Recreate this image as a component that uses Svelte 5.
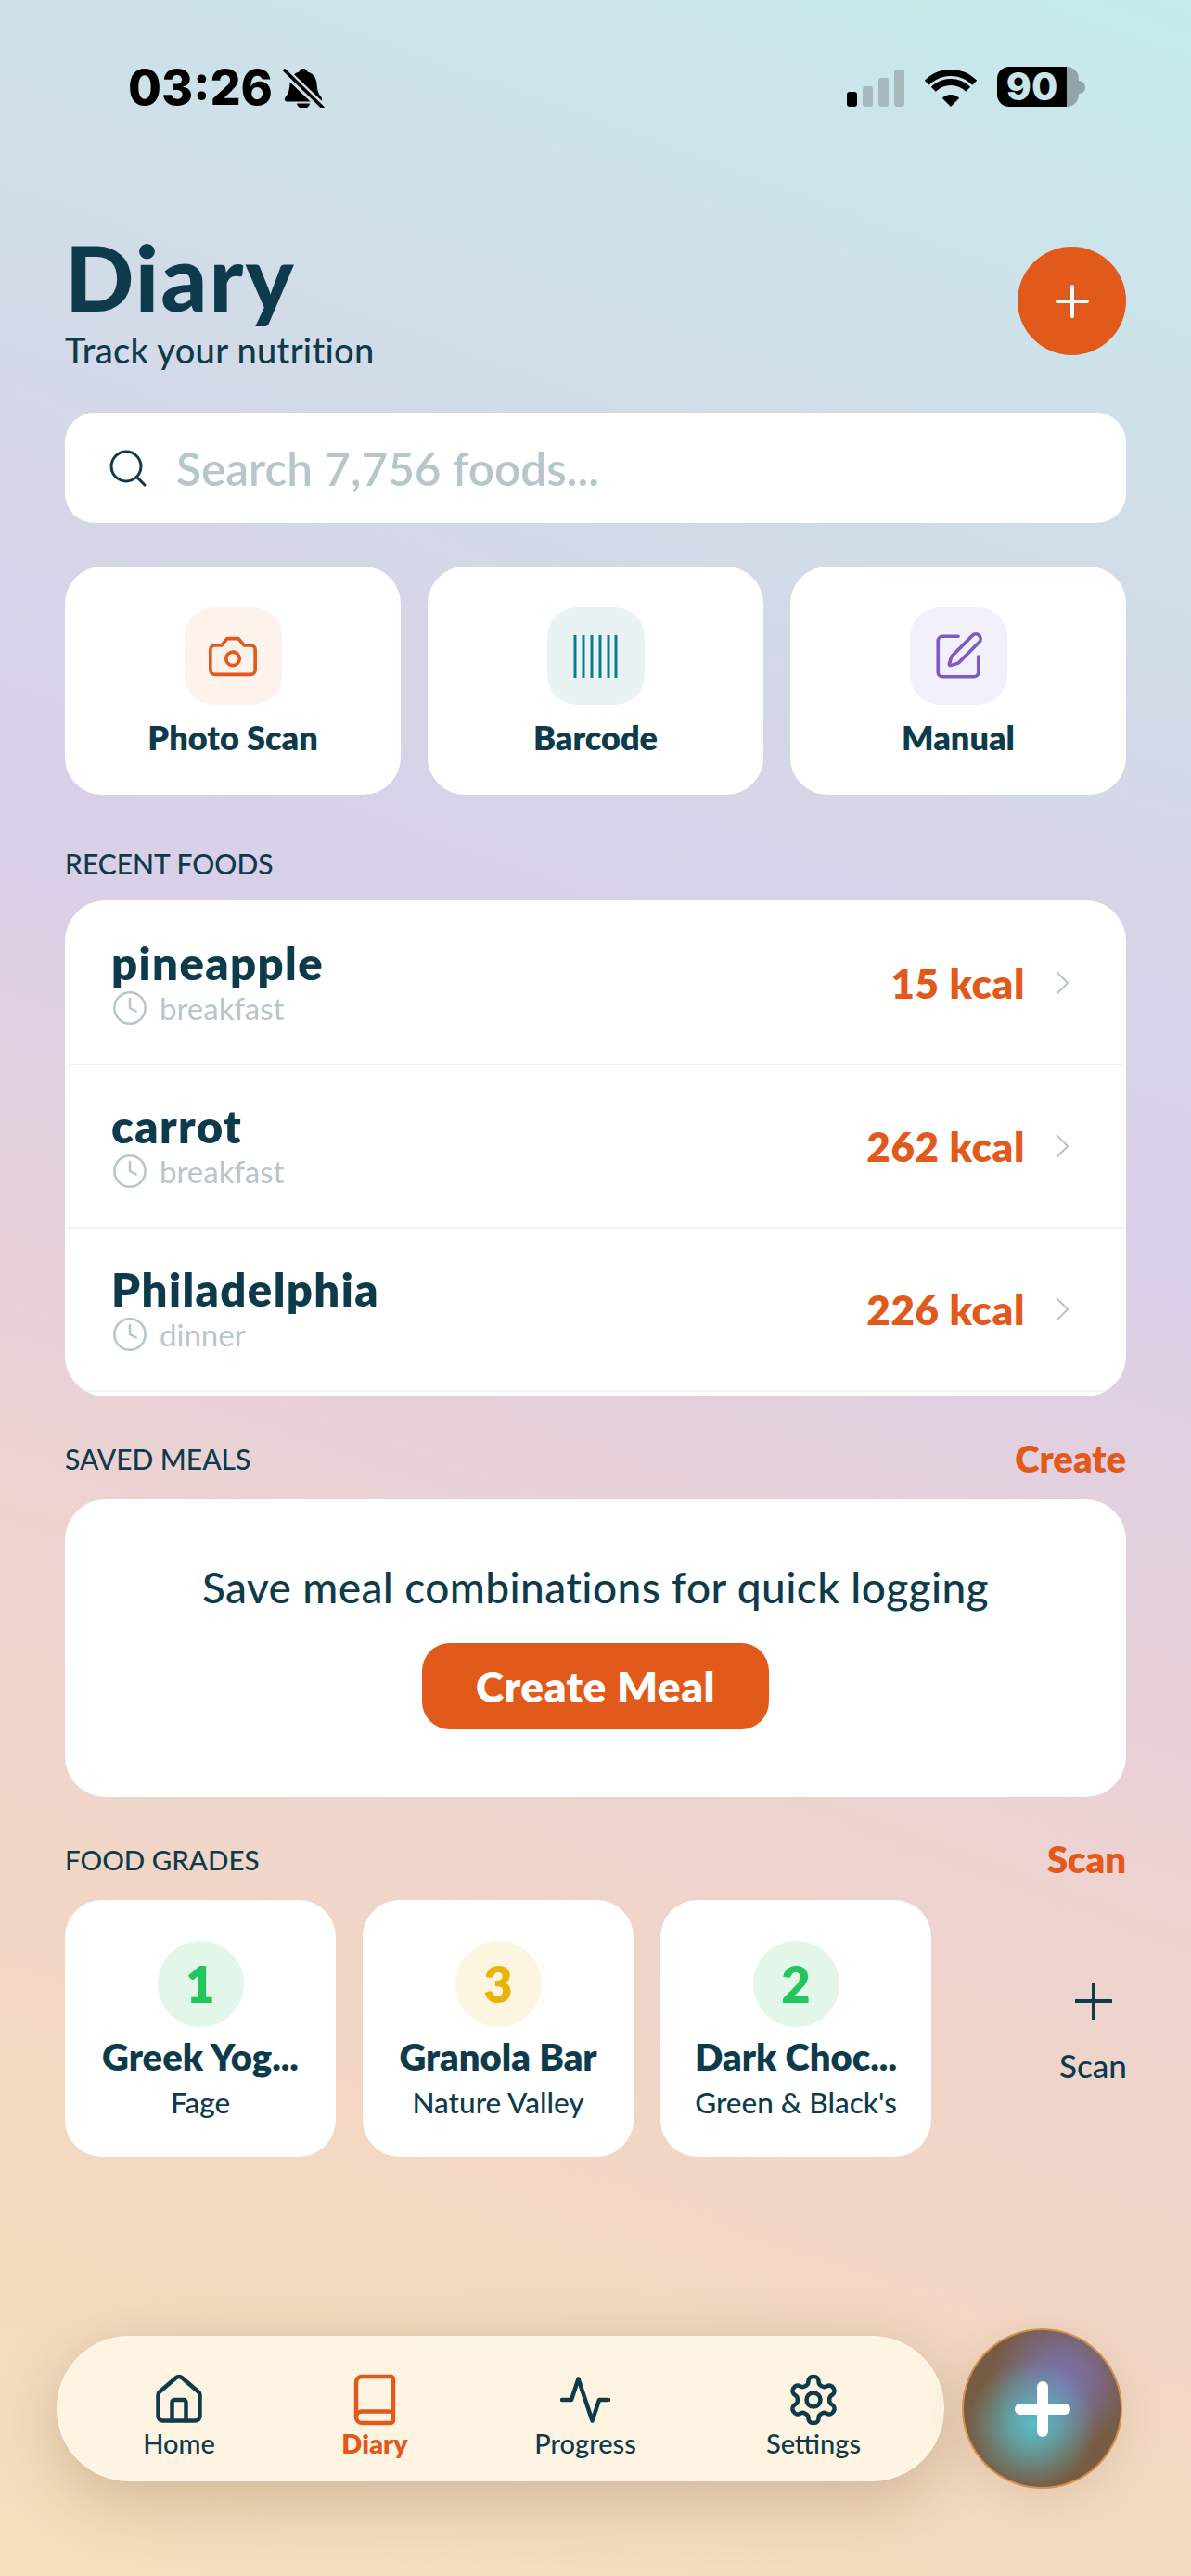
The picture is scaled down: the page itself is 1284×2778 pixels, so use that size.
<script>
  const actions = [
    { label: 'Photo Scan', cls: 'orange', kind: 'camera' },
    { label: 'Barcode', cls: 'teal', kind: 'barcode' },
    { label: 'Manual', cls: 'purple', kind: 'pen' }
  ];
  const foods = [
    { name: 'pineapple', meal: 'breakfast', kcal: '15 kcal' },
    { name: 'carrot', meal: 'breakfast', kcal: '262 kcal' },
    { name: 'Philadelphia', meal: 'dinner', kcal: '226 kcal' }
  ];
  const grades = [
    { n: 1, name: 'Greek Yog...', brand: 'Fage', cls: 'green' },
    { n: 3, name: 'Granola Bar', brand: 'Nature Valley', cls: 'yellow' },
    { n: 2, name: 'Dark Choc...', brand: "Green & Black's", cls: 'green' }
  ];
  const nav = [
    { label: 'Home', kind: 'home' },
    { label: 'Diary', kind: 'book', active: true },
    { label: 'Progress', kind: 'activity' },
    { label: 'Settings', kind: 'gear' }
  ];
</script>

<div class="page">
  <div class="status">
    <div class="status-left">
      <span class="time">03:26</span>
      <svg class="bell" viewBox="0 0 46 44" width="46" height="44">
        <mask id="slash"><rect width="46" height="44" fill="#fff" /><line x1="1" y1="2" x2="44" y2="43" stroke="#000" stroke-width="9" /></mask>
        <path mask="url(#slash)" fill="#000" d="M23 1c2.500 0 4 1.500 4.500 3.500C33.500 6 37 11 37.500 17c.5 7 1.500 11 5 15 1.500 2 .5 4.500-2 4.500H5.500c-2.500 0-3.500-2.500-2-4.500 3.500-4 4.500-8 5-15C9 11 12.500 6 18.500 4.500 19 2.500 20.500 1 23 1z" />
        <path mask="url(#slash)" fill="#000" d="M16 38.500h14c-.5 3.500-3.500 5.500-7 5.500s-6.500-2-7-5.500z" />
        <line x1="3" y1="3" x2="44" y2="43" stroke="#000" stroke-width="3.600" stroke-linecap="round" />
      </svg>
    </div>
    <div class="status-right">
      <div class="signal"><i class="on b1"></i><i class="b2"></i><i class="b3"></i><i class="b4"></i></div>
      <svg class="wifi" viewBox="0 0 56 40" width="56" height="40">
        <path d="M2.200 14.200A36.500 36.500 0 0 1 53.800 14.200" fill="none" stroke="#000" stroke-width="7" />
        <path d="M9.300 21.300A26.500 26.500 0 0 1 46.700 21.300" fill="none" stroke="#000" stroke-width="7" />
        <path d="M28 40L18.800 30.800A13 13 0 0 1 37.200 30.800Z" fill="#000" />
      </svg>
      <div class="battery"><div class="batt-fill">90</div><div class="batt-rest"></div><div class="nib"></div></div>
    </div>
  </div>

  <header class="head">
    <div class="titles">
      <h1>Diary</h1>
      <p>Track your nutrition</p>
    </div>
    <div class="add">
      <svg viewBox="0 0 36 36" width="36" height="36"><path d="M18 2v32M2 18h32" stroke="#fff" stroke-width="4" stroke-linecap="round" /></svg>
    </div>
  </header>

  <div class="search">
    <svg viewBox="0 0 24 24" width="48" height="48" fill="none" stroke="#0d3b4c" stroke-width="1.500" stroke-linecap="round" stroke-linejoin="round"><circle cx="11" cy="11" r="8" /><path d="m21 21-4.300-4.300" /></svg>
    <span>Search 7,756 foods...</span>
  </div>

  <div class="actions">
    {#each actions as a}
      <div class="action">
        <div class="tile {a.cls}">
          {#if a.kind === 'camera'}
            <svg viewBox="0 0 24 24" width="58" height="58" fill="none" stroke="#e1591b" stroke-width="1.500" stroke-linecap="round" stroke-linejoin="round"><path d="M14.500 4h-5L7 7H4a2 2 0 0 0-2 2v9a2 2 0 0 0 2 2h16a2 2 0 0 0 2-2V9a2 2 0 0 0-2-2h-3l-2.500-3z" /><circle cx="12" cy="13" r="3" /></svg>
          {:else if a.kind === 'barcode'}
            <svg viewBox="0 0 48 48" width="48" height="48" stroke="#0e7c90" stroke-width="3"><path d="M2 1v46M11 1v46M20 1v46M29 1v46M38 1v46M46 1v46" /></svg>
          {:else}
            <svg viewBox="0 0 24 24" width="58" height="58" fill="none" stroke="#7c5cc4" stroke-width="1.500" stroke-linecap="round" stroke-linejoin="round"><path d="M12 3H5a2 2 0 0 0-2 2v14a2 2 0 0 0 2 2h14a2 2 0 0 0 2-2v-7" /><path d="M18.375 2.625a1 1 0 0 1 3 3l-9.013 9.014a2 2 0 0 1-.853.505l-2.873.84a.5.500 0 0 1-.62-.62l.84-2.873a2 2 0 0 1 .506-.852z" /></svg>
          {/if}
        </div>
        <div class="action-label">{a.label}</div>
      </div>
    {/each}
  </div>

  <div class="sec-head recent"><span class="sec-title">RECENT FOODS</span></div>
  <div class="card list">
    {#each foods as f}
      <div class="row">
        <div>
          <div class="food">{f.name}</div>
          <div class="meal">
            <svg viewBox="0 0 24 24" width="40" height="40" fill="none" stroke="#b7c6cb" stroke-width="1.500" stroke-linecap="round" stroke-linejoin="round"><circle cx="12" cy="12" r="10" /><path d="M12 6v6l4 2" /></svg>
            <span>{f.meal}</span>
          </div>
        </div>
        <div class="kcal-wrap">
          <span class="kcal">{f.kcal}</span>
          <svg viewBox="0 0 24 24" width="34" height="34" fill="none" stroke="#b7c6cb" stroke-width="1.500" stroke-linecap="round" stroke-linejoin="round"><path d="m9 4 8 8-8 8" /></svg>
        </div>
      </div>
    {/each}
  </div>

  <div class="sec-head saved"><span class="sec-title">SAVED MEALS</span><span class="link">Create</span></div>
  <div class="card empty">
    <p>Save meal combinations for quick logging</p>
    <div class="cta">Create Meal</div>
  </div>

  <div class="sec-head gradesh"><span class="sec-title fg">FOOD GRADES</span><span class="link">Scan</span></div>
  <div class="grades">
    {#each grades as g}
      <div class="grade">
        <div class="badge {g.cls}">{g.n}</div>
        <div class="gname">{g.name}</div>
        <div class="gbrand">{g.brand}</div>
      </div>
    {/each}
    <div class="scan">
      <svg viewBox="0 0 40 40" width="40" height="40"><path d="M20 1v38M1 20h38" stroke="#0d3b4c" stroke-width="4" stroke-linecap="round" /></svg>
      <span>Scan</span>
    </div>
  </div>

  <nav class="nav">
    {#each nav as n}
      <div class="nav-item" class:active={n.active}>
        <svg viewBox="0 0 24 24" width="60" height="60" fill="none" stroke="currentColor" stroke-width="1.800" stroke-linecap="round" stroke-linejoin="round">
          {#if n.kind === 'home'}
            <path d="M15 21v-8a1 1 0 0 0-1-1h-4a1 1 0 0 0-1 1v8" /><path d="M3 10a2 2 0 0 1 .709-1.528l7-6a2 2 0 0 1 2.582 0l7 6A2 2 0 0 1 21 10v9a2 2 0 0 1-2 2H5a2 2 0 0 1-2-2z" />
          {:else if n.kind === 'book'}
            <path d="M4 19.500v-15A2.500 2.500 0 0 1 6.500 2H19a1 1 0 0 1 1 1v18a1 1 0 0 1-1 1H6.500a1 1 0 0 1 0-5H20" />
          {:else if n.kind === 'activity'}
            <path d="M22 12h-4l-3 9L9 3l-3 9H2" />
          {:else}
            <path d="M12.220 2h-.44a2 2 0 0 0-2 2v.18a2 2 0 0 1-1 1.730l-.43.250a2 2 0 0 1-2 0l-.15-.08a2 2 0 0 0-2.730.730l-.22.380a2 2 0 0 0 .730 2.730l.15.100a2 2 0 0 1 1 1.720v.510a2 2 0 0 1-1 1.740l-.15.090a2 2 0 0 0-.730 2.730l.22.380a2 2 0 0 0 2.730.730l.15-.08a2 2 0 0 1 2 0l.43.250a2 2 0 0 1 1 1.730V20a2 2 0 0 0 2 2h.44a2 2 0 0 0 2-2v-.18a2 2 0 0 1 1-1.730l.43-.250a2 2 0 0 1 2 0l.15.080a2 2 0 0 0 2.730-.730l.22-.390a2 2 0 0 0-.730-2.730l-.15-.08a2 2 0 0 1-1-1.740v-.5a2 2 0 0 1 1-1.740l.15-.090a2 2 0 0 0 .730-2.730l-.22-.380a2 2 0 0 0-2.730-.730l-.15.080a2 2 0 0 1-2 0l-.43-.250a2 2 0 0 1-1-1.730V4a2 2 0 0 0-2-2z" /><circle cx="12" cy="12" r="3" />
          {/if}
        </svg>
        <span>{n.label}</span>
      </div>
    {/each}
  </nav>
  <div class="fab">
    <svg viewBox="0 0 60 60" width="60" height="60"><path d="M30 6v48M6 30h48" stroke="#fff" stroke-width="12" stroke-linecap="round" /></svg>
  </div>
</div>

<style>
  :global(body) { margin: 0; }
  .page {
    position: relative;
    box-sizing: border-box;
    width: 1284px;
    height: 2778px;
    overflow: hidden;
    padding: 0 70px;
    color: #0d3b4c;
    font-family: Lato, "Noto Sans", sans-serif;
    background: linear-gradient(200deg, #c6ebeb 0%, #d2dbe8 22%, #d9cfe8 42%, #ecd2d2 62%, #f3d7c3 80%, #f5dfbc 100%);
  }
  .status { height: 190px; display: flex; justify-content: space-between; align-items: flex-start; padding: 73px 44px 0 68px; box-sizing: border-box; }
  .status-left { display: flex; align-items: center; gap: 10px; }
  .time { font: 800 52px/44px Inter, sans-serif; color: #000; }
  .bell { display: block; }
  .status-right { display: flex; align-items: flex-end; height: 42px; }
  .signal { display: flex; align-items: flex-end; gap: 6px; margin-right: 22px; }
  .signal i { width: 11px; border-radius: 3px; background: #a6b9bd; display: block; }
  .signal .on { background: #000; }
  .b1 { height: 16px; } .b2 { height: 22px; } .b3 { height: 31px; } .b4 { height: 40px; }
  .wifi { display: block; margin-right: 22px; }
  .battery { display: flex; align-items: center; }
  .batt-fill { width: 75px; height: 43px; border-radius: 13px 0 0 13px; background: #000; color: #c8e6ea; font: 800 41px/43px Inter, sans-serif; text-align: center; }
  .batt-rest { width: 13px; height: 43px; border-radius: 0 13px 13px 0; background: #90a5a9; }
  .nib { width: 7px; height: 14px; background: #90a5a9; border-radius: 0 7px 7px 0; }

  .head { display: flex; justify-content: space-between; align-items: flex-start; height: 255px; }
  .titles { margin-top: 53px; }
  h1 { margin: 0 0 2px; font-size: 98px; line-height: 110px; font-weight: 900; letter-spacing: 2px; }
  .head p { margin: 0; font-size: 38px; line-height: 44px; font-weight: 500; letter-spacing: .3px; }
  .add { width: 117px; height: 117px; margin-top: 76px; border-radius: 50%; background: #e1591b; display: flex; align-items: center; justify-content: center; }

  .search { height: 119px; box-sizing: border-box; background: #fff; border-radius: 32px; display: flex; align-items: center; gap: 28px; padding-left: 44px; font-size: 49.500px; font-weight: 600; color: #b7c6cb; }
  .actions { display: grid; grid-template-columns: repeat(3, 362px); gap: 29px; margin-top: 47px; }
  .action { height: 246px; background: #fff; border-radius: 40px; display: flex; flex-direction: column; align-items: center; padding-top: 44px; box-sizing: border-box; }
  .tile { width: 105px; height: 105px; border-radius: 32px; display: flex; align-items: center; justify-content: center; }
  .orange { background: #fdf2ec; } .teal { background: #e9f3f4; } .purple { background: #f2f0fb; }
  .action-label { margin-top: 13px; font-size: 36px; line-height: 44px; font-weight: 800; }

  .sec-head { display: flex; justify-content: space-between; align-items: center; height: 40px; }
  .recent { margin-top: 54px; margin-bottom: 20px; }
  .saved { margin-top: 47px; margin-bottom: 24px; }
  .gradesh { margin-top: 47px; margin-bottom: 24px; }
  .sec-title { font-size: 30px; font-weight: 500; }
  .fg { font-size: 29.500px; }
  .link { font-size: 40px; font-weight: 800; color: #e1591b; }

  .card { background: #fff; border-radius: 44px; }
  .list { height: 535px; box-sizing: border-box; padding: 2px 2px 0; overflow: hidden; }
  .row { height: 174px; border-bottom: 2px solid #f0f3f4; display: flex; justify-content: space-between; align-items: center; padding: 0 51px 0 48px; }
  .food { font-size: 49px; line-height: 50px; font-weight: 800; letter-spacing: 1.400px; }
  .meal { display: flex; align-items: center; gap: 12px; margin-top: 4px; font-size: 33px; line-height: 40px; color: #b7c6cb; }
  .kcal-wrap { display: flex; align-items: center; gap: 22px; }
  .kcal { font-size: 44px; font-weight: 800; letter-spacing: .6px; color: #e1591b; }

  .empty { height: 321px; display: flex; flex-direction: column; align-items: center; padding-top: 68px; box-sizing: border-box; }
  .empty p { margin: 0; font-size: 46px; line-height: 54px; font-weight: 500; letter-spacing: .4px; }
  .cta { margin-top: 33px; width: 374px; height: 93px; border-radius: 30px; background: #e1591b; color: #fff; font-size: 46px; font-weight: 800; letter-spacing: .5px; display: flex; align-items: center; justify-content: center; }

  .grades { display: flex; gap: 29px; }
  .grade { width: 292px; height: 277px; background: #fff; border-radius: 40px; display: flex; flex-direction: column; align-items: center; padding-top: 44px; box-sizing: border-box; }
  .badge { width: 93px; height: 93px; border-radius: 50%; display: flex; align-items: center; justify-content: center; font-size: 54px; font-weight: 800; }
  .green { background: #e3f6ea; color: #22c55e; }
  .yellow { background: #fcf5e0; color: #eab308; }
  .gname { margin-top: 8px; text-align: center; font-size: 40px; line-height: 48px; font-weight: 800; white-space: nowrap; }
  .gbrand { margin-top: 5px; font-size: 31.500px; line-height: 40px; font-weight: 500; }
  .scan { flex: 1; display: flex; flex-direction: column; align-items: center; gap: 29px; padding: 89px 0 0 80px; font-size: 35px; line-height: 40px; font-weight: 500; margin-right: -30px; }

  .nav { position: absolute; left: 61px; top: 2519px; width: 957px; height: 157px; box-sizing: border-box; border: 2px solid #fff8ec; border-radius: 79px; background: #fff4e1; box-shadow: 0 18px 70px rgba(90, 60, 20, .24); }
  .nav-item { position: absolute; top: 37px; width: 200px; display: flex; flex-direction: column; align-items: center; font-size: 29px; line-height: 34px; font-weight: 500; color: #0d3b4c; }
  .nav-item svg { display: block; }
  .nav-item:nth-child(1) { left: 30px; }
  .nav-item:nth-child(2) { left: 241px; }
  .nav-item:nth-child(3) { left: 468px; }
  .nav-item:nth-child(4) { left: 714px; }
  .nav-item.active { color: #e1591b; font-weight: 800; }
  .fab { position: absolute; left: 1037px; top: 2511px; width: 173px; height: 173px; box-sizing: border-box; border: 2px solid #cf9150; border-radius: 50%; display: flex; align-items: center; justify-content: center; background: radial-gradient(circle at 44% 60%, #59bcc6 0%, rgba(89, 188, 198, .7) 18%, rgba(89, 188, 198, 0) 50%), radial-gradient(circle at 62% 32%, #7c70a8 0%, rgba(124, 112, 168, .8) 18%, rgba(124, 112, 168, 0) 48%), #775c44; box-shadow: 0 10px 50px rgba(90, 60, 20, .12); }
</style>
